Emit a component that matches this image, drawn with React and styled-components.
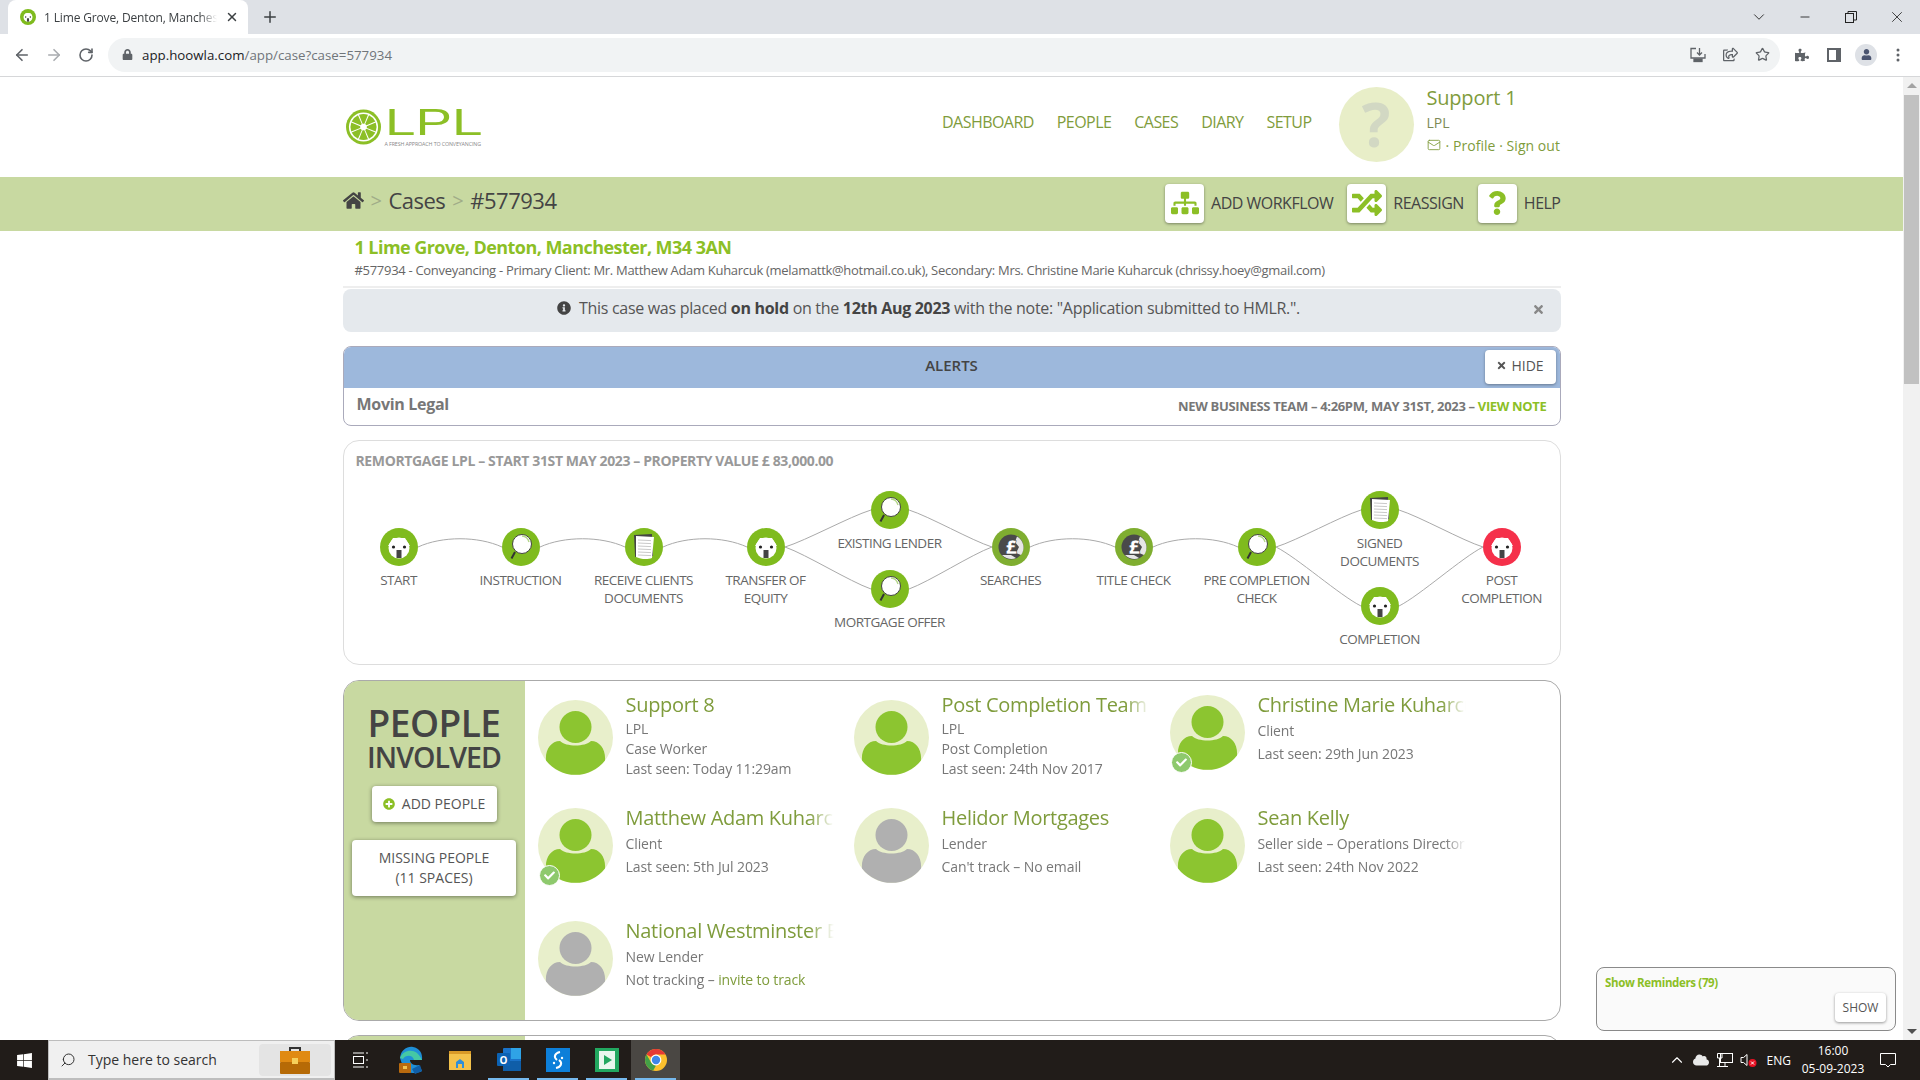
import React from 'react'
import styled, { createGlobalStyle } from 'styled-components'
import { ArrowLeft, ArrowRight, RotateCw, Plus, X, ChevronDown, ChevronUp, Minus, Star, Search, Mail } from 'lucide-react'
import {
  FaHome, FaSitemap, FaRandom, FaQuestion, FaInfoCircle, FaTimes, FaPlusCircle, FaLock,
  FaWindows, FaRegShareSquare, FaPuzzlePiece, FaUser, FaCheck, FaCloud,
} from 'react-icons/fa'

const green = '#8cbf26'
const olive = '#7f9c3c'
const barGreen = '#c8d9a1'
const font = '"Open Sans", "Noto Sans", sans-serif'

const GlobalStyle = createGlobalStyle`
  html, body { margin: 0; padding: 0; height: 100%; overflow: hidden; background: #fff; }
  body { font-family: ${font}; color: #555; letter-spacing: -0.3px; }
  * { box-sizing: border-box; }
`

const Shell = styled.div`
  width: 1920px;
  height: 1080px;
  display: flex;
  flex-direction: column;
  overflow: hidden;
`

/* browser chrome */
const TabStrip = styled.div`
  height: 34px;
  flex: none;
  background: #dee1e6;
  display: flex;
  align-items: flex-end;
  padding-left: 8px;
`
const Tab = styled.div`
  width: 240px;
  height: 34px;
  background: #fff;
  border-radius: 8px 8px 0 0;
  display: flex;
  align-items: center;
  padding: 0 9px 0 12px;
  gap: 8px;
  font-size: 12px;
  letter-spacing: -0.15px;
  color: #3c4043;
`
const TabTitle = styled.span`
  flex: 1;
  white-space: nowrap;
  overflow: hidden;
  -webkit-mask-image: linear-gradient(to right, #000 90%, transparent);
  mask-image: linear-gradient(to right, #000 90%, transparent);
`
const NewTab = styled.div`
  width: 44px;
  display: flex;
  justify-content: center;
  align-self: center;
  color: #3c4043;
`
const WindowControls = styled.div`
  margin-left: auto;
  align-self: stretch;
  display: flex;
`
const WindowButton = styled.div`
  width: 46px;
  display: flex;
  align-items: center;
  justify-content: center;
  color: #222;
`
const Toolbar = styled.div`
  height: 43px;
  flex: none;
  display: flex;
  align-items: center;
  background: #fff;
  border-bottom: 1px solid #d6d7d9;
  padding: 0 6px 1px 6px;
  letter-spacing: 0;
`
const NavIcon = styled.div`
  width: 32px;
  display: flex;
  align-items: center;
  justify-content: center;
  color: ${p => (p.$dim ? '#a9acb0' : '#5f6368')};
`
const Omnibox = styled.div`
  margin: 0 6px;
  width: 1672px;
  height: 34px;
  background: #f1f3f4;
  border-radius: 17px;
  display: flex;
  align-items: center;
  padding: 0 0 0 14px;
  color: #5f6368;
  font-size: 13.3px;
`
const Url = styled.span`
  margin-left: 9px;
  color: #70757a;
  strong { font-weight: 400; color: #202124; }
`
const OmniIcons = styled.div`
  margin-left: auto;
  margin-right: 2px;
  display: flex;
`
const ToolbarIcon = styled.div`
  width: 32px;
  height: 32px;
  display: flex;
  align-items: center;
  justify-content: center;
  color: #5f6368;
`
const ProfileDot = styled.div`
  width: 22px;
  height: 22px;
  border-radius: 50%;
  background: #dee1e6;
  color: #4a5470;
  display: flex;
  align-items: center;
  justify-content: center;
`

/* page */
const Viewport = styled.div`
  flex: 1;
  min-height: 0;
  display: flex;
  position: relative;
`
const Page = styled.div`
  flex: 1;
  min-width: 0;
  overflow: hidden;
`
const Scrollbar = styled.div`
  width: 17px;
  flex: none;
  background: #f1f1f1;
  display: flex;
  flex-direction: column;
  align-items: center;
  justify-content: space-between;
  padding: 6px 0;
`
const ScrollThumb = styled.div`
  position: absolute;
  top: 18px;
  right: 1px;
  width: 15px;
  height: 289px;
  background: #c1c1c1;
`
const ScrollArrow = styled.div`
  width: 0;
  height: 0;
  border-left: 5px solid transparent;
  border-right: 5px solid transparent;
  ${p => (p.$down ? 'border-top: 5px solid #505050;' : 'border-bottom: 5px solid #a3a3a3;')}
`
const Wrap = styled.div`
  width: 1218px;
  margin: 0 auto;
`
const Header = styled(Wrap)`
  height: 100px;
  display: flex;
  align-items: center;
`
const Logo = styled.div`
  margin-left: 3px;
  margin-top: 3px;
  display: flex;
  gap: 4px;
`
const LogoText = styled.div`
  display: flex;
  flex-direction: column;
  width: 96px;
`
const LogoMark = styled.span`
  display: block;
  font-family: "Liberation Sans", sans-serif;
  font-weight: 400;
  font-size: 37px;
  line-height: 27px;
  height: 27px;
  letter-spacing: 0;
  color: ${green};
  transform: scaleX(1.48);
  transform-origin: left;
  white-space: nowrap;
`
const LogoTag = styled.span`
  margin-top: 5px;
  font-size: 5.3px;
  line-height: 7px;
  letter-spacing: -0.02em;
  color: #888;
  white-space: nowrap;
`
const Nav = styled.nav`
  margin-left: auto;
  margin-top: -10px;
  display: flex;
  gap: 23px;
`
const NavLink = styled.a`
  font-size: 16px;
  line-height: 22px;
  letter-spacing: -0.55px;
  color: ${olive};
`
const UserBlock = styled.div`
  margin-left: 27px;
  margin-top: -5px;
  display: flex;
  align-items: center;
  gap: 13px;
`
const UserAvatar = styled.div`
  width: 75px;
  height: 75px;
  border-radius: 50%;
  background: #e8eec8;
  color: #d2d8c3;
  font-size: 60px;
  font-weight: 700;
  line-height: 75px;
  text-align: center;
`
const UserInfo = styled.div`
  width: 134px;
  margin-top: -8px;
`
const UserName = styled.div`
  font-size: 20px;
  line-height: 26px;
  letter-spacing: -0.2px;
  color: ${olive};
`
const UserLine = styled.div`
  font-size: 14px;
  line-height: 23px;
  letter-spacing: 0.05px;
  display: flex;
  align-items: center;
  gap: 5px;
  color: ${p => (p.$muted ? '#7d8a55' : olive)};
  white-space: nowrap;
`
const ActionBar = styled.div`
  height: 54px;
  background: ${barGreen};
`
const ActionInner = styled(Wrap)`
  height: 100%;
  display: flex;
  align-items: center;
  justify-content: space-between;
`
const Crumbs = styled.div`
  display: flex;
  align-items: center;
  font-size: 22px;
  letter-spacing: -0.5px;
  color: #444;
  margin-top: -8px;
  span { color: #a0ac88; font-size: 20px; margin: 0 7px; }
`
const Actions = styled.div`
  display: flex;
  gap: 14px;
`
const Action = styled.div`
  display: flex;
  align-items: center;
  gap: 7px;
  font-size: 16px;
  letter-spacing: -0.5px;
  color: #444;
  margin-top: -2px;
`
const ActionIcon = styled.div`
  width: 39px;
  height: 39px;
  background: #fff;
  border-radius: 4px;
  box-shadow: 0 1px 3px rgba(0, 0, 0, 0.4);
  display: flex;
  align-items: center;
  justify-content: center;
  color: ${green};
`
const CaseInfo = styled.div`
  padding: 5px 12px 0;
`
const CaseTitle = styled.div`
  font-size: 18px;
  font-weight: 700;
  line-height: 22px;
  letter-spacing: -0.55px;
  color: ${green};
`
const CaseMeta = styled.div`
  margin-top: 3px;
  font-size: 13px;
  line-height: 18px;
  color: #666;
  white-space: nowrap;
`
const Rule = styled.div`
  margin-top: 7px;
  height: 2px;
  background: #eee;
`
const Notice = styled.div`
  position: relative;
  margin-top: 1px;
  height: 43px;
  background: #e5e9ed;
  border-radius: 8px;
  padding: 0 46px 5px 0;
  display: flex;
  align-items: center;
  justify-content: center;
  gap: 8px;
  font-size: 16px;
  color: #555;
  b { color: #444; }
`
const NoticeClose = styled.div`
  position: absolute;
  right: 16px;
  top: 14px;
  color: #888;
  display: flex;
`
const Alerts = styled.section`
  margin-top: 14px;
  height: 80px;
  border: 1px solid #aab;
  border-radius: 8px;
  overflow: hidden;
`
const AlertsHead = styled.div`
  position: relative;
  height: 41px;
  background: #9db8dc;
  padding-bottom: 5px;
  display: flex;
  align-items: center;
  justify-content: center;
  font-size: 15px;
  font-weight: 600;
  letter-spacing: 0;
  color: #444;
`
const HideButton = styled.div`
  position: absolute;
  right: 4px;
  top: 3px;
  width: 71px;
  height: 34px;
  padding-bottom: 3px;
  background: #fff;
  border-radius: 4px;
  box-shadow: 0 1px 3px rgba(0, 0, 0, 0.35);
  display: flex;
  align-items: center;
  justify-content: center;
  gap: 4px;
  font-size: 14px;
  font-weight: 500;
  color: #555;
`
const AlertRow = styled.div`
  display: flex;
  justify-content: space-between;
  padding: 5px 13px 0 13px;
`
const AlertFrom = styled.div`
  font-size: 16px;
  font-weight: 700;
  color: #777;
`
const AlertNote = styled.div`
  margin-top: 4px;
  font-size: 13px;
  font-weight: 700;
  letter-spacing: -0.33px;
  color: #777;
  text-transform: uppercase;
  a { color: ${green}; }
`
const Workflow = styled.section`
  margin-top: 14px;
  height: 225px;
  border: 1px solid #ddd;
  border-radius: 16px;
  padding-top: 13px;
`
const WorkflowTitle = styled.div`
  padding-left: 12px;
  font-size: 14px;
  line-height: 14px;
  font-weight: 700;
  letter-spacing: -0.38px;
  color: #999;
`
const Canvas = styled.div`
  position: relative;
  margin-top: 7px;
  height: 188px;
`
const CanvasLines = styled.svg`
  position: absolute;
  inset: 0;
`
const Node = styled.div`
  position: absolute;
  width: 120px;
  margin-left: -60px;
  margin-top: -19px;
  display: flex;
  flex-direction: column;
  align-items: center;
  text-align: center;
`
const NodeLabel = styled.div`
  margin-top: 5px;
  font-size: 13.5px;
  line-height: 18px;
  letter-spacing: -0.5px;
  color: #666;
  text-transform: uppercase;
  white-space: pre-line;
`
const People = styled.section`
  margin-top: 15px;
  height: 341px;
  border: 1px solid #aaa;
  border-radius: 16px;
  overflow: hidden;
  display: flex;
`
const PeopleSide = styled.div`
  width: 181px;
  flex: none;
  background: ${barGreen};
  display: flex;
  flex-direction: column;
  align-items: center;
  padding-top: 23px;
`
const PeopleTitle = styled.div`
  font-size: 37px;
  line-height: 38px;
  font-weight: 600;
  letter-spacing: -0.5px;
  color: #444;
`
const PeopleSub = styled.div`
  font-size: 28.5px;
  line-height: 31px;
  font-weight: 600;
  letter-spacing: -0.9px;
  color: #444;
`
const SideButton = styled.div`
  width: ${p => p.$w}px;
  height: ${p => p.$h}px;
  margin-top: ${p => p.$mt}px;
  background: #fff;
  border-radius: 4px;
  box-shadow: 0 1px 4px rgba(0, 0, 0, 0.45);
  display: flex;
  align-items: center;
  justify-content: center;
  gap: 7px;
  text-align: center;
  font-size: 14px;
  line-height: 20px;
  letter-spacing: 0;
  color: #555;
`
const PeopleGrid = styled.div`
  flex: 1;
  display: grid;
  grid-template-columns: repeat(3, 316px);
  grid-auto-rows: 113px;
  padding: 12px 0 0 13px;
`
const Card = styled.div`
  display: flex;
  align-items: flex-start;
  gap: 13px;
`
const AvatarFrame = styled.div`
  position: relative;
  width: 75px;
  height: 75px;
  flex: none;
  margin-top: ${p => (p.$tall ? 7 : 2)}px;
`
const SeenBadge = styled.div`
  position: absolute;
  left: 1px;
  bottom: -3px;
  width: 21px;
  height: 21px;
  border-radius: 50%;
  background: #8ec96d;
  border: 1px solid #fff;
  color: #fff;
  display: flex;
  align-items: center;
  justify-content: center;
`
const CardBody = styled.div`
  width: 208px;
  min-width: 0;
`
const PersonName = styled.div`
  font-size: 20px;
  line-height: 24px;
  color: ${olive};
  white-space: nowrap;
  overflow: hidden;
  -webkit-mask-image: linear-gradient(to right, #000 88%, transparent);
  mask-image: linear-gradient(to right, #000 88%, transparent);
`
const PersonLines = styled.div`
  margin-top: 2px;
  font-size: 14px;
  line-height: ${p => (p.$tall ? 20 : 23)}px;
  letter-spacing: -0.1px;
  color: #777;
  white-space: nowrap;
  overflow: hidden;
  -webkit-mask-image: linear-gradient(to right, #000 90%, transparent);
  mask-image: linear-gradient(to right, #000 90%, transparent);
  a { color: ${olive}; }
`
const NextPanel = styled.section`
  margin-top: 14px;
  height: 200px;
  border: 1px solid #aaa;
  border-radius: 16px;
  overflow: hidden;
`
const NextSide = styled.div`
  width: 181px;
  height: 100%;
  background: ${barGreen};
`
const Reminders = styled.aside`
  position: absolute;
  right: 24px;
  bottom: 9px;
  width: 300px;
  height: 64px;
  background: #fafafa;
  border: 1px solid #8a8a8a;
  border-radius: 8px;
  padding: 7px 8px;
  font-size: 11.5px;
  line-height: 16px;
  font-weight: 700;
  letter-spacing: -0.35px;
  color: ${green};
`
const ShowButton = styled.div`
  position: absolute;
  right: 9px;
  bottom: 8px;
  width: 51px;
  height: 29px;
  background: #fff;
  border-radius: 4px;
  box-shadow: 0 1px 3px rgba(0, 0, 0, 0.4);
  font-size: 12px;
  font-weight: 400;
  letter-spacing: 0;
  line-height: 29px;
  text-align: center;
  color: #555;
`

/* taskbar */
const Taskbar = styled.div`
  height: 40px;
  flex: none;
  background: #211c19;
  display: flex;
  align-items: center;
  color: #fff;
  font-size: 12px;
  letter-spacing: 0;
`
const StartButton = styled.div`
  width: 48px;
  display: flex;
  justify-content: center;
`
const SearchBox = styled.div`
  width: 287px;
  height: 40px;
  background: #f0f0f0;
  border: 1px solid #bdbdbd;
  border-bottom-width: 2px;
  display: flex;
  align-items: center;
  padding-left: 11px;
  gap: 12px;
  font-size: 14px;
  color: #333;
`
const SearchChip = styled.div`
  margin-left: auto;
  margin-right: 3px;
  width: 72px;
  height: 32px;
  border-radius: 4px;
  background: #e4e4e4;
  display: flex;
  align-items: center;
  justify-content: center;
`
const TaskApps = styled.div`
  display: flex;
  height: 100%;
`
const TaskApp = styled.div`
  position: relative;
  width: 49px;
  margin-left: ${p => p.$shift || 0}px;
  height: 100%;
  display: flex;
  align-items: center;
  justify-content: center;
  background: ${p => (p.$active ? '#4a4743' : 'transparent')};
  &::after {
    content: '';
    display: ${p => (p.$open ? 'block' : 'none')};
    position: absolute;
    left: 4px;
    right: 4px;
    bottom: 0;
    height: 2px;
    background: #76b9ed;
  }
`
const Tray = styled.div`
  margin-left: auto;
  display: flex;
  align-items: center;
  height: 100%;
`
const TrayIcon = styled.div`
  width: 24px;
  display: flex;
  justify-content: center;
`
const TrayLang = styled.div`
  margin: 0 7px 0 6px;
  font-size: 12px;
`
const Clock = styled.div`
  width: 70px;
  text-align: center;
  line-height: 18px;
  font-size: 12px;
`
const NotifyButton = styled.div`
  width: 40px;
  margin-right: 12px;
  display: flex;
  justify-content: center;
`

const NODE_GREEN = '#7fbb1e'
const HouseGlyph = () => (
  <>
    <path d="M8 18 L13 10 H25 L30 18 Z" fill="#fff" />
    <circle cx="19" cy="20" r="10.5" fill="#fff" />
    <circle cx="13.5" cy="19" r="1.6" fill="#222" />
    <circle cx="24.5" cy="19" r="1.6" fill="#222" />
    <rect x="16.5" y="22" width="5" height="8" fill="#444" />
  </>
)
const LensGlyph = () => (
  <>
    <line x1="13" y1="24" x2="9.5" y2="30.5" stroke="#333" strokeWidth="2" />
    <circle cx="20" cy="16" r="9.5" fill="#fff" stroke="#444" strokeWidth="1" />
    <path d="M20 8 A8 8 0 0 1 27 14" fill="none" stroke="#b4d68a" strokeWidth="1.4" />
  </>
)
const PageGlyph = () => (
  <>
    <rect x="9.5" y="6.5" width="18" height="22" fill="#444" transform="rotate(-3 18 17)" />
    <path d="M11 8 L29 9 L27 30 C22 32 15 31 11 29 Z" fill="#fff" />
    {[12, 15, 18, 21, 24, 27].map(y => (
      <line key={y} x1="13" y1={y} x2="26" y2={y + 0.6} stroke="#bbb" strokeWidth="0.8" />
    ))}
  </>
)
const PoundGlyph = () => (
  <>
    <circle cx="19" cy="19" r="12.5" fill="#4a4a4a" />
    <path d="M25 8.5 A12.5 12.5 0 0 1 29 27 L24 25 L27 19 L23 14 Z" fill="#e6e6e6" />
    <path d="M10 27 C14 31 20 32 24 30 L19 27 Z" fill="#e6e6e6" />
    <text x="19" y="26" textAnchor="middle" fontFamily={font} fontSize="20" fontWeight="800" fill="#fff" stroke="#333" strokeWidth="0.5">£</text>
  </>
)
const glyphs = { house: HouseGlyph, lens: LensGlyph, page: PageGlyph, pound: PoundGlyph }

const StepIcon = ({ kind, color = NODE_GREEN, size = 38 }) => {
  const Glyph = glyphs[kind]
  return (
    <svg width={size} height={size} viewBox="0 0 38 38">
      <circle cx="19" cy="19" r="19" fill={color} />
      <Glyph />
    </svg>
  )
}

const steps = [
  { x: 55, y: 72, kind: 'house', label: 'Start' },
  { x: 177, y: 72, kind: 'lens', label: 'Instruction' },
  { x: 300, y: 72, kind: 'page', label: 'Receive clients\ndocuments' },
  { x: 422, y: 72, kind: 'house', label: 'Transfer of\nequity' },
  { x: 546, y: 35, kind: 'lens', label: 'Existing lender' },
  { x: 546, y: 114, kind: 'lens', label: 'Mortgage offer' },
  { x: 667, y: 72, kind: 'pound', label: 'Searches', color: '#7fae30' },
  { x: 790, y: 72, kind: 'pound', label: 'Title check', color: '#7fae30' },
  { x: 913, y: 72, kind: 'lens', label: 'Pre completion\ncheck' },
  { x: 1036, y: 35, kind: 'page', label: 'Signed\ndocuments' },
  { x: 1036, y: 131, kind: 'house', label: 'Completion' },
  { x: 1158, y: 72, kind: 'house', label: 'Post\ncompletion', color: '#f5304a' },
]

const links = [[0, 1], [1, 2], [2, 3], [3, 4], [3, 5], [4, 6], [5, 6], [6, 7], [7, 8], [8, 9], [8, 10], [9, 11], [10, 11]]

const linkPath = (a, b) => {
  const x1 = a.x + 19
  const x2 = b.x - 19
  if (a.y === b.y) {
    return `M${x1} ${a.y} C${x1 + 24} ${a.y - 11} ${x2 - 24} ${a.y - 11} ${x2} ${b.y}`
  }
  const dx = (x2 - x1) * 0.25
  const dy = (b.y - a.y) * 0.18
  return `M${x1} ${a.y} C${x1 + dx} ${a.y + dy} ${x2 - dx} ${b.y - dy} ${x2} ${b.y}`
}

const people = [
  { name: 'Support 8', lines: ['LPL', 'Case Worker', 'Last seen: Today 11:29am'] },
  { name: 'Post Completion Team', lines: ['LPL', 'Post Completion', 'Last seen: 24th Nov 2017'] },
  { name: 'Christine Marie Kuharcuk', lines: ['Client', 'Last seen: 29th Jun 2023'], seen: true },
  { name: 'Matthew Adam Kuharcuk', lines: ['Client', 'Last seen: 5th Jul 2023'], seen: true },
  { name: 'Helidor Mortgages', lines: ['Lender', "Can't track – No email"], grey: true },
  { name: 'Sean Kelly', lines: ['Seller side – Operations Director', 'Last seen: 24th Nov 2022'] },
  { name: 'National Westminster Bank', lines: ['New Lender', <>Not tracking – <a>invite to track</a></>], grey: true },
]

const Person = ({ grey }) => {
  const fill = grey ? '#b0b0b0' : '#8cc530'
  return (
    <svg width="75" height="75" viewBox="0 0 75 75">
      <circle cx="37.5" cy="37.5" r="37.5" fill="#e8efcb" />
      <circle cx="37.5" cy="27" r="16" fill={fill} />
      <path d="M8 60.5 C7 50 13 41 22 41 C28 47 47 47 53 41 C62 41 68 50 67 60.5 A37.5 37.5 0 0 1 8 60.5 Z" fill={fill} />
    </svg>
  )
}

const LimeLogo = () => (
  <svg width="35" height="36" viewBox="-18 -18 36 36">
    <circle r="18" fill="#8cbf26" />
    <circle r="15" fill="#fff" />
    {[0, 45, 90, 135, 180, 225, 270, 315].map(a => (
      <path key={a} d="M-4.6 -12.6 A13.4 13.4 0 0 1 4.6 -12.6 L0.9 -3.4 L-0.9 -3.4 Z" fill="#8cbf26" transform={`rotate(${a})`} />
    ))}
  </svg>
)

const ChromeLogo = ({ size = 24 }) => (
  <svg width={size} height={size} viewBox="0 0 24 24">
    <circle cx="12" cy="12" r="11" fill="#fbc02d" />
    <path d="M12 1 A11 11 0 0 1 21.5 6.5 H12 A5.5 5.5 0 0 0 7.2 9.2 L2.5 6.5 A11 11 0 0 1 12 1 Z" fill="#e53935" />
    <path d="M2.5 6.5 L7.2 14.8 A5.5 5.5 0 0 0 12 17.5 L9.2 22.6 A11 11 0 0 1 2.5 6.5 Z" fill="#43a047" />
    <circle cx="12" cy="12" r="5.4" fill="#fff" />
    <circle cx="12" cy="12" r="4.2" fill="#3f86e8" />
  </svg>
)

const EdgeLogo = () => (
  <svg width="26" height="30" viewBox="0 0 26 30">
    <path d="M2 13 C3 4 10 1 15 2 C21 3 25 8 24 15 L12 15 C12 18 15 21 21 20 L24 26 C17 30 8 28 5 22 Z" fill="#1f8fd6" />
    <path d="M2 13 C5 5 14 4 19 8 C22 11 23 13 24 15 L16 15 C15 10 8 9 5 14 Z" fill="#45c8a4" />
    <rect x="1" y="18" width="12" height="10" rx="1" fill="#b96a0e" />
    <rect x="5" y="21" width="4" height="3" fill="#f2c14e" />
    <path d="M14 24 L22 20 L24 26 L17 29 Z" fill="#0f5ea8" />
  </svg>
)
const FolderLogo = () => (
  <svg width="24" height="24" viewBox="0 0 24 24">
    <path d="M1 3 H9 L11 5 H23 V22 H1 Z" fill="#f4c24b" />
    <rect x="1" y="3" width="22" height="3" fill="#d99a28" />
    <path d="M8 20 V14 L12 11 L16 14 V20 H14 V16 H10 V20 Z" fill="#2f8fd8" />
  </svg>
)
const OutlookLogo = () => (
  <svg width="26" height="26" viewBox="0 0 26 26">
    <rect x="7" y="1" width="18" height="22" rx="1" fill="#1a73c9" />
    <rect x="15" y="1" width="10" height="11" fill="#2fa3e6" />
    <path d="M7 14 L25 14 V24 H7 Z" fill="#0f5ea8" />
    <rect x="1" y="6" width="13" height="13" rx="1" fill="#0c62b3" />
    <text x="7.5" y="16.5" textAnchor="middle" fontFamily={font} fontSize="10" fontWeight="700" fill="#fff">O</text>
  </svg>
)
const SyncLogo = () => (
  <svg width="24" height="24" viewBox="0 0 24 24">
    <rect width="24" height="24" fill="#0d7fd9" />
    <path d="M14 4 C9 5 7 9 11 12 M10 20 C15 19 17 15 13 12" fill="none" stroke="#fff" strokeWidth="2" />
    <circle cx="16" cy="10" r="1.2" fill="#fff" />
    <circle cx="8" cy="15" r="1.2" fill="#fff" />
  </svg>
)
const PlayLogo = () => (
  <svg width="24" height="24" viewBox="0 0 24 24">
    <rect width="24" height="24" fill="#22a860" />
    <rect x="4" y="3" width="16" height="18" fill="#e8f7ee" />
    <path d="M9 7 L17 12 L9 17 Z" fill="#22a860" />
  </svg>
)
const Briefcase = () => (
  <svg width="30" height="28" viewBox="0 0 30 28">
    <path d="M10 6 V2 H20 V6" fill="none" stroke="#333" strokeWidth="2" />
    <rect y="5" width="30" height="11" fill="#e08a12" />
    <rect y="16" width="30" height="12" rx="1" fill="#b66a06" />
    <rect x="12" y="12" width="6" height="6" fill="#f5cf5b" />
  </svg>
)

export default function App() {
  return (
    <Shell>
      <GlobalStyle />
      <TabStrip>
        <Tab>
          <StepIcon kind="house" size={16} />
          <TabTitle>1 Lime Grove, Denton, Manchester</TabTitle>
          <X size={14} strokeWidth={2.5} />
        </Tab>
        <NewTab><Plus size={18} /></NewTab>
        <WindowControls>
          <WindowButton><ChevronDown size={18} strokeWidth={1.2} /></WindowButton>
          <WindowButton><Minus size={14} strokeWidth={1.5} /></WindowButton>
          <WindowButton>
            <svg width="12" height="12" viewBox="0 0 12 12" fill="none" stroke="#222">
              <rect x="0.5" y="2.5" width="8" height="9" />
              <path d="M3 2.5 V0.5 H11.5 V9 H8.5" />
            </svg>
          </WindowButton>
          <WindowButton><X size={18} strokeWidth={1.1} /></WindowButton>
        </WindowControls>
      </TabStrip>
      <Toolbar>
        <NavIcon><ArrowLeft size={18} strokeWidth={2.2} /></NavIcon>
        <NavIcon $dim><ArrowRight size={18} strokeWidth={2.2} /></NavIcon>
        <NavIcon><RotateCw size={16} strokeWidth={2.4} /></NavIcon>
        <Omnibox>
          <FaLock size={11} />
          <Url><strong>app.hoowla.com</strong>/app/case?case=577934</Url>
          <OmniIcons>
            <ToolbarIcon>
              <svg width="16" height="16" viewBox="0 0 16 16" fill="none" stroke="#5f6368" strokeWidth="1.3">
                <path d="M6 1.5 H1 V11 H15 V7" />
                <path d="M9.5 1 V7.5 M7 5.5 L9.5 8 L12 5.5" />
                <rect x="4" y="12" width="8" height="2.5" fill="#5f6368" />
              </svg>
            </ToolbarIcon>
            <ToolbarIcon><FaRegShareSquare size={15} /></ToolbarIcon>
            <ToolbarIcon><Star size={15} strokeWidth={2} /></ToolbarIcon>
          </OmniIcons>
        </Omnibox>
        <ToolbarIcon><FaPuzzlePiece size={14} /></ToolbarIcon>
        <ToolbarIcon>
          <svg width="14" height="14" viewBox="0 0 14 14">
            <rect width="14" height="14" fill="#5f6368" />
            <rect x="2" y="2" width="7" height="10" fill="#fff" />
          </svg>
        </ToolbarIcon>
        <ToolbarIcon><ProfileDot><FaUser size={11} /></ProfileDot></ToolbarIcon>
        <ToolbarIcon>
          <svg width="4" height="14" viewBox="0 0 4 14" fill="#5f6368">
            <circle cx="2" cy="2" r="1.5" /><circle cx="2" cy="7" r="1.5" /><circle cx="2" cy="12" r="1.5" />
          </svg>
        </ToolbarIcon>
      </Toolbar>

      <Viewport>
        <Page>
          <Header>
            <Logo>
              <LimeLogo />
              <LogoText>
                <LogoMark>LPL</LogoMark>
                <LogoTag>A FRESH APPROACH TO CONVEYANCING</LogoTag>
              </LogoText>
            </Logo>
            <Nav>
              {['DASHBOARD', 'PEOPLE', 'CASES', 'DIARY', 'SETUP'].map(item => <NavLink key={item}>{item}</NavLink>)}
            </Nav>
            <UserBlock>
              <UserAvatar>?</UserAvatar>
              <UserInfo>
                <UserName>Support 1</UserName>
                <UserLine $muted>LPL</UserLine>
                <UserLine><Mail size={14} strokeWidth={1.5} /> · Profile · Sign out</UserLine>
              </UserInfo>
            </UserBlock>
          </Header>

          <ActionBar>
            <ActionInner>
              <Crumbs>
                <FaHome size={21} color="#444" /><span>&gt;</span>Cases<span>&gt;</span>#577934
              </Crumbs>
              <Actions>
                <Action><ActionIcon><FaSitemap size={28} /></ActionIcon>ADD WORKFLOW</Action>
                <Action><ActionIcon><FaRandom size={30} /></ActionIcon>REASSIGN</Action>
                <Action><ActionIcon><FaQuestion size={24} /></ActionIcon>HELP</Action>
              </Actions>
            </ActionInner>
          </ActionBar>

          <Wrap>
            <CaseInfo>
              <CaseTitle>1 Lime Grove, Denton, Manchester, M34 3AN</CaseTitle>
              <CaseMeta>#577934 - Conveyancing - Primary Client: Mr. Matthew Adam Kuharcuk (melamattk@hotmail.co.uk), Secondary: Mrs. Christine Marie Kuharcuk (chrissy.hoey@gmail.com)</CaseMeta>
            </CaseInfo>
            <Rule />
            <Notice>
              <FaInfoCircle size={14} color="#444" />
              <span>This case was placed <b>on hold</b> on the <b>12th Aug 2023</b> with the note: "Application submitted to HMLR.".</span>
              <NoticeClose><FaTimes size={13} /></NoticeClose>
            </Notice>

            <Alerts>
              <AlertsHead>
                ALERTS
                <HideButton><FaTimes size={11} />HIDE</HideButton>
              </AlertsHead>
              <AlertRow>
                <AlertFrom>Movin Legal</AlertFrom>
                <AlertNote>New Business Team – 4:26pm, May 31st, 2023 – <a>View note</a></AlertNote>
              </AlertRow>
            </Alerts>

            <Workflow>
              <WorkflowTitle>REMORTGAGE LPL – START 31ST MAY 2023 – PROPERTY VALUE £ 83,000.00</WorkflowTitle>
              <Canvas>
                <CanvasLines width="1216" height="188" fill="none" stroke="#aaa">
                  {links.map(([from, to]) => (
                    <path key={`${from}-${to}`} d={linkPath(steps[from], steps[to])} />
                  ))}
                </CanvasLines>
                {steps.map(step => (
                  <Node key={step.label} style={{ left: step.x, top: step.y }}>
                    <StepIcon kind={step.kind} color={step.color} />
                    <NodeLabel>{step.label}</NodeLabel>
                  </Node>
                ))}
              </Canvas>
            </Workflow>

            <People>
              <PeopleSide>
                <PeopleTitle>PEOPLE</PeopleTitle>
                <PeopleSub>INVOLVED</PeopleSub>
                <SideButton $w={125} $h={36} $mt={13}>
                  <FaPlusCircle size={12} color={green} />ADD PEOPLE
                </SideButton>
                <SideButton $w={164} $h={56} $mt={18}>MISSING PEOPLE<br />(11 SPACES)</SideButton>
              </PeopleSide>
              <PeopleGrid>
                {people.map(person => {
                  const tall = person.lines.length === 3
                  return (
                    <Card key={person.name}>
                      <AvatarFrame $tall={tall}>
                        <Person grey={person.grey} />
                        {person.seen && <SeenBadge><FaCheck size={11} /></SeenBadge>}
                      </AvatarFrame>
                      <CardBody>
                        <PersonName>{person.name}</PersonName>
                        <PersonLines $tall={tall}>
                          {person.lines.map((line, i) => <div key={i}>{line}</div>)}
                        </PersonLines>
                      </CardBody>
                    </Card>
                  )
                })}
              </PeopleGrid>
            </People>

            <NextPanel><NextSide /></NextPanel>
          </Wrap>
        </Page>
        <Scrollbar>
          <ScrollArrow />
          <ScrollThumb />
          <ScrollArrow $down />
        </Scrollbar>
        <Reminders>
          Show Reminders (79)
          <ShowButton>SHOW</ShowButton>
        </Reminders>
      </Viewport>

      <Taskbar>
        <StartButton><FaWindows size={17} /></StartButton>
        <SearchBox>
          <Search size={16} strokeWidth={1.5} style={{ transform: 'scaleX(-1)' }} />
          Type here to search
          <SearchChip><Briefcase /></SearchChip>
        </SearchBox>
        <TaskApps>
          <TaskApp>
            <svg width="16" height="18" viewBox="0 0 16 18" fill="none" stroke="#fff">
              <rect x="1.5" y="5.5" width="10" height="7" />
              <path d="M1 2 H12 M1 16 H12 M14 2 H16 M14 9 H16 M14 16 H16" />
            </svg>
          </TaskApp>
          <TaskApp $shift={2}><EdgeLogo /></TaskApp>
          <TaskApp><FolderLogo /></TaskApp>
          <TaskApp $open><OutlookLogo /></TaskApp>
          <TaskApp $open><SyncLogo /></TaskApp>
          <TaskApp $open><PlayLogo /></TaskApp>
          <TaskApp $active $open><ChromeLogo /></TaskApp>
        </TaskApps>
        <Tray>
          <TrayIcon><ChevronUp size={18} strokeWidth={1.5} /></TrayIcon>
          <TrayIcon><FaCloud size={16} color="#e8e8e8" /></TrayIcon>
          <TrayIcon>
            <svg width="16" height="14" viewBox="0 0 16 14" fill="none" stroke="#fff">
              <rect x="3.5" y="0.5" width="12" height="9" />
              <path d="M0.5 0.5 H5 V5 H0.5 Z M2.5 5 V13.5 M0 13.5 H11 M8 10 V13" />
            </svg>
          </TrayIcon>
          <TrayIcon>
            <svg width="17" height="14" viewBox="0 0 17 14">
              <path d="M1 4.5 H3.5 L7 1.5 V12.5 L3.5 9.5 H1 Z" fill="none" stroke="#fff" />
              <circle cx="12.5" cy="10" r="4" fill="#e81123" />
              <path d="M11 8.5 L14 11.5 M14 8.5 L11 11.5" stroke="#fff" />
            </svg>
          </TrayIcon>
          <TrayLang>ENG</TrayLang>
          <Clock>16:00<br />05-09-2023</Clock>
          <NotifyButton>
            <svg width="16" height="15" viewBox="0 0 16 15" fill="none" stroke="#fff">
              <path d="M0.5 0.5 H15.5 V11.5 H10.5 L8 14 L5.5 11.5 H0.5 Z" />
            </svg>
          </NotifyButton>
        </Tray>
      </Taskbar>
    </Shell>
  )
}
